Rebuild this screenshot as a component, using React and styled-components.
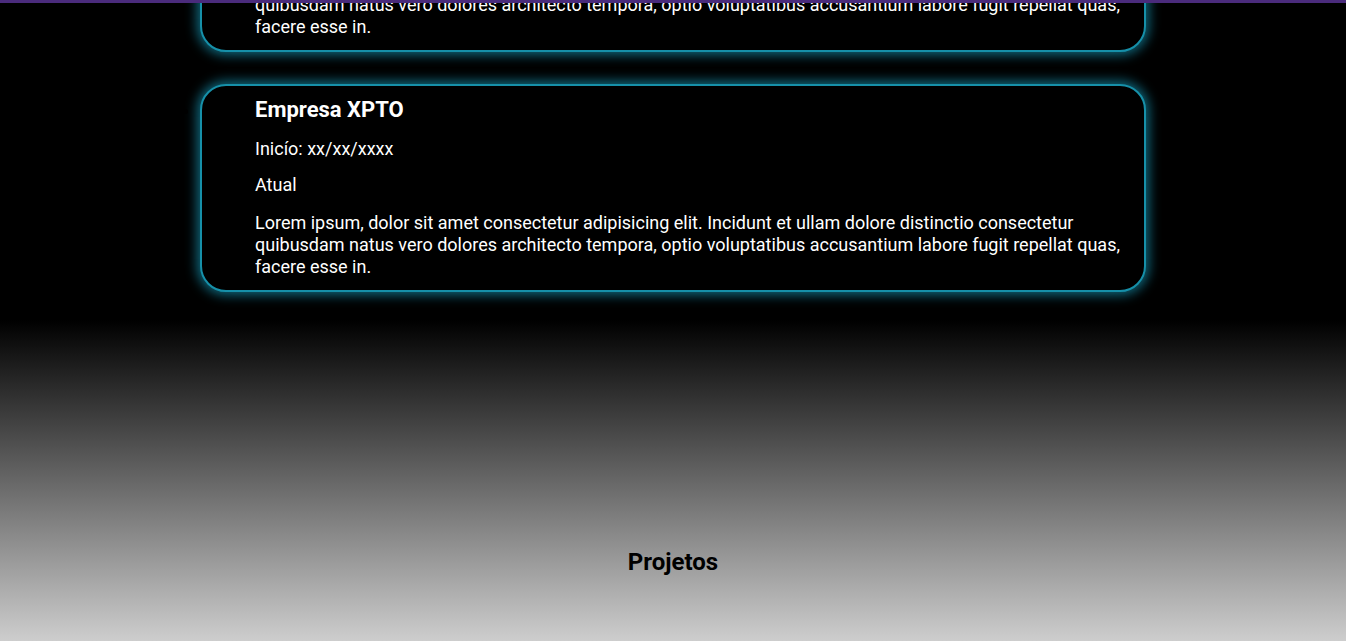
import React from "react";
import styled, { createGlobalStyle } from "styled-components";

const GlobalStyle = createGlobalStyle`
  html, body {
    margin: 0;
    padding: 0;
    background: #000;
    font-family: Roboto, "Noto Sans", "Liberation Sans", sans-serif;
    color: #fff;
  }
  * { box-sizing: border-box; }
`;

const TopBar = styled.header`
  position: fixed;
  top: 0;
  left: 0;
  right: 0;
  height: 3px;
  background: #4a2b7c;
  z-index: 10;
`;

const Page = styled.main`
  display: flex;
  flex-direction: column;
`;

const ExperienceList = styled.ul`
  list-style: disc outside;
  margin: -156px 0 28px;
  padding: 0;
  display: flex;
  flex-direction: column;
  gap: 32px;
`;

const Card = styled.li`
  width: 946px;
  margin: 0 auto;
  padding: 11px 20px 12px 53px;
  border: 2px solid #1690a9;
  border-radius: 26px;
  background: #000;
  box-shadow: 0 0 12px 3px rgba(22, 150, 180, 0.7);
  &::marker {
    color: #000;
  }
`;

const Company = styled.h3`
  margin: 0 0 15px;
  font-size: 22px;
  line-height: 26px;
  font-weight: 700;
`;

const Line = styled.p`
  margin: 0 0 ${(p) => p.$gap}px;
  font-size: 18px;
  line-height: 22px;
`;

const Projects = styled.section`
  height: 330px;
  background: linear-gradient(to bottom, #000 0%, #d3d3d3 100%);
  padding-top: 228px;
  display: flex;
  justify-content: center;
`;

const SectionTitle = styled.h2`
  margin: 0;
  font-size: 24px;
  font-weight: 700;
  color: #000;
`;

const jobs = [
  { company: "Empresa XPTO", start: "xx/xx/xxxx", end: "Atual" },
  { company: "Empresa XPTO", start: "xx/xx/xxxx", end: "Atual" },
];

const desc =
  "Lorem ipsum, dolor sit amet consectetur adipisicing elit. Incidunt et ullam dolore distinctio consectetur quibusdam natus vero dolores architecto tempora, optio voluptatibus accusantium labore fugit repellat quas, facere esse in.";

export default function App() {
  return (
    <>
      <GlobalStyle />
      <TopBar />
      <Page>
        <ExperienceList>
          {jobs.map((j, i) => (
            <Card key={i}>
              <Company>{j.company}</Company>
              <Line $gap={14}>Inicío: {j.start}</Line>
              <Line $gap={16}>{j.end}</Line>
              <Line $gap={0}>{desc}</Line>
            </Card>
          ))}
        </ExperienceList>
        <Projects>
          <SectionTitle>Projetos</SectionTitle>
        </Projects>
      </Page>
    </>
  );
}
